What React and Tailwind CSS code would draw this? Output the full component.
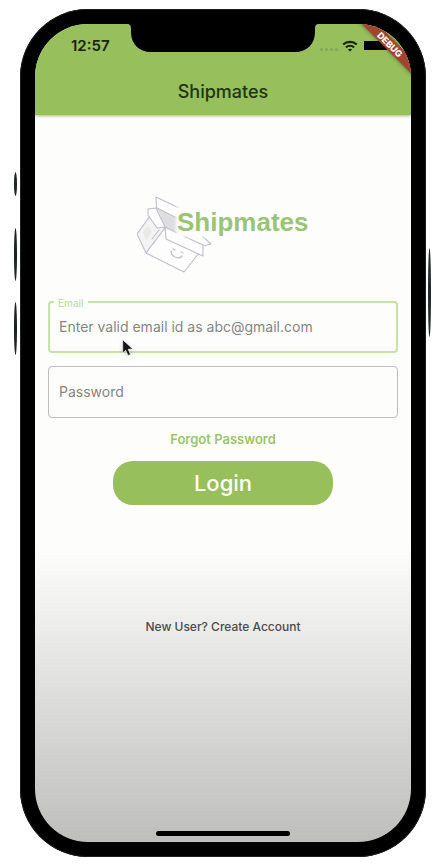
function WifiIcon() {
  return (
    <svg viewBox="0 0 16 12" className="h-3 w-4" fill="none" stroke="#16240a" strokeWidth="2.1" aria-hidden="true">
      <path d="M1.2 4.6C5 .9 11 .9 14.8 4.6" />
      <path d="M3.9 7.4c2.3-2.2 5.9-2.2 8.2 0" />
      <path d="M8 11.6 5.9 9.5c1.2-1.1 3-1.1 4.2 0Z" fill="#16240a" stroke="none" />
    </svg>
  );
}

function Notch() {
  return (
    <svg viewBox="0 0 192 29" className="absolute -top-px left-1/2 h-[29px] w-48 -translate-x-1/2" fill="#000" aria-hidden="true">
      <path d="M0 0h192v1c-3 0-4 1.500-4 5v3c0 12-8 20-20 20H24C12 29 4 21 4 9V6c0-3.500-1-5-4-5Z" />
    </svg>
  );
}

function BoxDrawing() {
  return (
    <svg viewBox="0 0 76 80" className="absolute left-0 top-0 h-20 w-[76px]" fill="#fdfdfd" stroke="#bfbecd" strokeWidth="1.1" strokeLinejoin="round" strokeLinecap="round" aria-hidden="true">
      <path d="M42 14 19 3v20l26 22Z" fill="#fdfdfd" stroke="none" />
      <path d="M42 14 19 3l1 18" fill="none" />
      <path d="M20 14 48 28v22L28 33Z" fill="#dedee2" stroke="none" />
      <path d="M20 14 40 24" fill="none" />
      <path d="m13 22-13 18 9 19 19-25Z" fill="#f3f3f3" />
      <path d="m6 38 5-6 4 6-6 9Z" fill="#e9e9e6" stroke="none" />
      <path d="m15 45 7-9" fill="none" />
      <path d="m28 34-19 25 38 19 15-19Z" />
      <path d="m11 15 8-1 9 19-8 1-9-13Z" />
      <path d="m28 33 1 12 37 17V51L42 40Z" />
      <path d="m66 52 8-2-11-10M48 44l3-4" fill="none" />
      <path d="M34 57c0 6 8 9 11 5M36 55l2 1M44 58l2 1" fill="none" strokeWidth="1.300" />
    </svg>
  );
}

function StatusBar() {
  return (
    <div className="flex h-[43px] items-center justify-between pl-9 pr-6 text-[#16240a]">
      <span className="text-[15px] leading-5 font-semibold">12:57</span>
      <div className="flex items-center">
        <div className="mr-1 mt-2 flex gap-0.5" aria-hidden="true">
          <i className="size-[3px] rounded-full bg-[#83a852]" />
          <i className="size-[3px] rounded-full bg-[#83a852]" />
          <i className="size-[3px] rounded-full bg-[#83a852]" />
          <i className="size-[3px] rounded-full bg-[#83a852]" />
        </div>
        <WifiIcon />
        <div className="ml-1.5 h-[9px] w-[23px] bg-black" />
      </div>
    </div>
  );
}

function Logo() {
  return (
    <div className="relative mx-auto mt-[79px] h-20 w-[172px]">
      <BoxDrawing />
      <div className="relative pl-10 pt-3.5">
        <span className="block bg-[#fdfefc]/90 font-['Liberation_Sans',Arial,sans-serif] text-[26px] leading-7 font-bold text-[#9bc474] shadow-[0_0_3px_1px_#fdfefc]">Shipmates</span>
      </div>
    </div>
  );
}

function Cursor() {
  return (
    <svg viewBox="0 0 12 18" className="pointer-events-none absolute left-[74px] top-[38px] h-[18px] w-3 drop-shadow-sm" aria-hidden="true">
      <path d="M.7.800v13.200l3-2.700 2.300 5.200 2.500-1.100-2.300-5.100 4.600-.4Z" fill="#161616" stroke="#fff" strokeWidth=".6" />
    </svg>
  );
}

export default function App() {
  return (
    <div className="relative bg-white pt-[9px] pr-3 pb-2 pl-5 font-[Inter,sans-serif]">
      <i className="absolute left-3.5 top-[172px] h-6 w-[3px] rounded-[50%] bg-[#202323]" />
      <i className="absolute left-3.5 top-[228px] h-[53px] w-[3px] rounded-[50%] bg-[#202323]" />
      <i className="absolute left-3.5 top-[302px] h-[53px] w-[3px] rounded-[50%] bg-[#202323]" />
      <i className="absolute right-[7px] top-[248px] h-[89px] w-[3px] rounded-[50%] bg-[#202b2e]" />
      <div className="rounded-[68px] bg-black p-[15px] ring-1 ring-[#1c2020] ring-inset">
        <div className="relative flex flex-col overflow-hidden rounded-[53px] bg-[linear-gradient(#fdfefc_64%,#bebebc_100%)]">
          <header className="relative bg-[#97bf5b] shadow-[0_1px_3px_#00000050]">
            <StatusBar />
            <h1 className="pb-2.5 pt-3 text-center text-[18px] leading-[26px] font-medium text-[#213510]">Shipmates</h1>
            <Notch />
            <div className="absolute -right-[29px] top-[15px] h-[11px] w-[100px] rotate-45 bg-[#a2442f] text-center text-[9px] leading-[11px] font-extrabold text-white shadow-[0_0_4px_#00000080]">DEBUG</div>
          </header>
          <main className="flex flex-col">
            <Logo />
            <form className="mx-[13px] mt-[27px] flex flex-col" onSubmit={(e) => e.preventDefault()}>
              <div className="relative">
                <input id="email" type="email" placeholder="Enter valid email id as abc@gmail.com" className="block h-[52px] w-full rounded-sm border-2 border-[#c3e3a8] bg-transparent px-[9px] pb-0.5 text-[14px] text-[#333] outline-none placeholder:text-[#858585]" />
                <label htmlFor="email" className="absolute left-1.5 -top-1 bg-[#fdfefc] px-1 text-[10px] leading-3 font-medium text-[#c0dfa6]">Email</label>
                <Cursor />
              </div>
              <input type="password" aria-label="Password" placeholder="Password" className="mt-[13px] block h-[52px] w-full rounded-sm border border-[#bdbdbd] bg-transparent px-2.5 pb-0.5 text-[14px] text-[#333] outline-none placeholder:text-[#858585]" />
              <a href="#forgot" className="mt-3 self-center text-[13px] leading-[18px] font-semibold text-[#9cc466]">Forgot Password</a>
              <button type="submit" className="mt-[13px] h-11 w-[220px] self-center rounded-[20px] bg-[#97bf5b] text-[22px] leading-7 font-medium text-white">Login</button>
            </form>
            <a href="#signup" className="mt-28 self-center text-[12px] leading-5 font-medium text-[#4a4a4a]">New User? Create Account</a>
          </main>
          <div className="mx-auto mt-[194px] mb-1.5 h-[5px] w-[134px] rounded-full bg-black" />
        </div>
      </div>
    </div>
  );
}
